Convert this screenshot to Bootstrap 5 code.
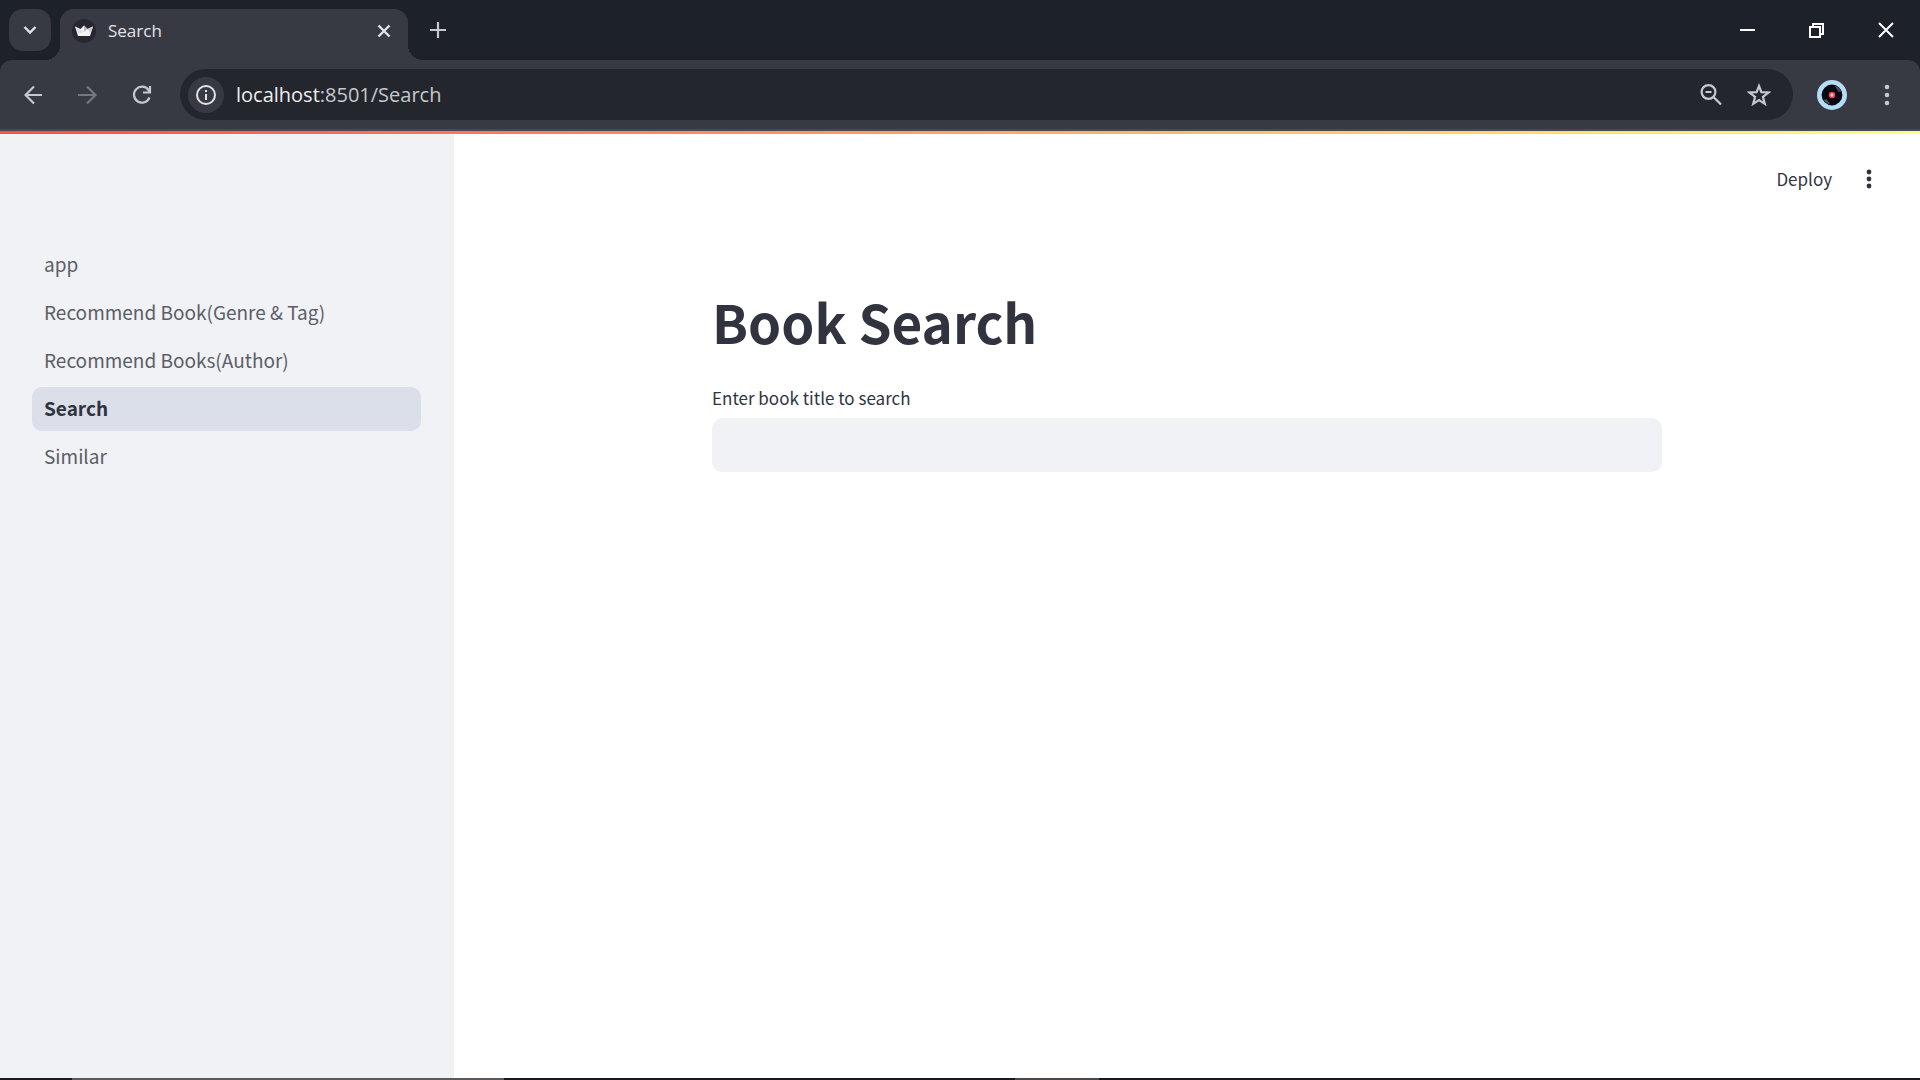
<!DOCTYPE html>
<html lang="en">
<head>
<meta charset="utf-8">
<meta name="viewport" content="width=device-width, initial-scale=1">
<title>Search</title>
<link href="https://cdn.jsdelivr.net/npm/bootstrap@5.3.0/dist/css/bootstrap.min.css" rel="stylesheet">
<style>
  body { font-family: "Noto Sans CJK JP", "Noto Sans", sans-serif; color: #31333f; background: #fff; }
  button { padding: 0; border: 0; background: none; color: inherit; }
  svg { display: block; }

  /* Browser window */
  .tabstrip { height: 60px; padding: 9px 0 0 9px; background: #1d2129; color: #e3e3e6; font-family: "Open Sans", sans-serif; }
  .tab-list-btn { width: 42px; height: 42px; border-radius: 14px; background: #383a43; }
  .tab-active { position: relative; width: 348px; height: 51px; margin-left: 9px; padding: 0 16px 8px 12px; border-radius: 14px 14px 0 0; background: #383a43; font-size: 17px; line-height: 24px; }
  .tab-active::before, .tab-active::after { content: ""; position: absolute; bottom: 0; width: 15px; height: 15px; }
  .tab-active::before { right: 100%; background: radial-gradient(circle at 0 0, transparent 15px, #383a43 15px); }
  .tab-active::after { left: 100%; background: radial-gradient(circle at 100% 0, transparent 15px, #383a43 15px); }
  .tab-add { height: 42px; }
  .win-btn { width: 69px; height: 42px; color: #fff; }
  .toolbar-wrap { background: #1d2129; }
  .toolbar { height: 71px; padding: 0 30px 0 24px; border-radius: 12px 12px 0 0; border-bottom: 2px solid #484a52; background: #383a43; color: #c7c8cf; }
  .nav-icons { width: 156px; gap: 34px; }
  .omnibox { height: 51px; border-radius: 26px; padding: 0 22px 0 8px; background: #24262e; }
  .site-info { width: 36px; height: 36px; border-radius: 50%; background: #383a43; color: #e3e3e6; }
  .address { font-family: "Open Sans", sans-serif; font-size: 20px; line-height: 28px; color: #c7c8cc; }
  .address b { font-weight: 400; color: #eeeef0; }
  .browser-menu { margin-left: 37px; }

  /* Page */
  .decoration { height: 3px; background: linear-gradient(90deg, #ff4b4b, #fffd80); }
  .side { width: 454px; padding: 109px 33px 32px 32px; background: #f0f2f6; }
  .side-link { display: block; padding: 7px 12px 9px; border-radius: 10px; font-size: 19px; line-height: 28px; color: #5c5e67; text-decoration: none; }
  .side-link.current { background: #dadfe9; color: #31333f; font-weight: 600; }
  .page-top { height: 90px; padding: 0 42px; gap: 28px; }
  .deploy { font-size: 17px; line-height: 24px; }
  .page-col { width: 100%; max-width: 950px; padding-top: 64px; }
  .page-title { margin-bottom: 32px; font-size: 53px; line-height: 66px; font-weight: 700; }
  .field-label { font-size: 17px; line-height: 24px; }
  .field-box { height: 54px; border: 0; border-radius: 10px; background: #f0f2f6; }
  .taskbar { height: 2px; background: #1c191e; }
  .task-wide { width: 432px; height: 2px; margin-left: 72px; background: #5b595b; }
  .task-short { width: 84px; height: 2px; margin-left: 511px; background: #4a484b; }
</style>
</head>
<body class="d-flex flex-column min-vh-100">
  <header>
    <div class="tabstrip d-flex">
      <button class="tab-list-btn d-flex align-items-center justify-content-center" aria-label="Search tabs">
        <svg width="14" height="10" viewBox="0 0 14 10" fill="none" stroke="currentColor" stroke-width="2.4"><path d="M1.5 2 7 7.500 12.500 2"/></svg>
      </button>
      <div class="tab-active d-flex align-items-center">
        <svg width="24" height="24" viewBox="0 0 24 24"><circle cx="12" cy="12" r="12" fill="#262730"/><path d="M3 7.500l5.500 2.500L12 6.500l3.500 3.500L21 7.500l-3 9.500H6z" fill="#f4f4f4"/><path d="M12 6.500l3.500 3.500L12 13z" fill="#b9b9bc"/><path d="M3 7.500 12 13l-5.500 1.500z" fill="#dedee0"/><path d="M15.500 10 21 7.500 18.500 14z" fill="#cfcfd2"/></svg>
        <span class="ms-2 ps-1 flex-grow-1">Search</span>
        <button aria-label="Close tab"><svg width="16" height="16" viewBox="0 0 16 16" stroke="currentColor" stroke-width="2.400"><path d="M2.500 2.500l11 11M13.500 2.500l-11 11"/></svg></button>
      </div>
      <button class="tab-add ms-3 ps-1 d-flex align-items-center" aria-label="New tab">
        <svg width="20" height="20" viewBox="0 0 20 20" stroke="#c7c8cf" stroke-width="2.200"><path d="M10 2v16M2 10h16"/></svg>
      </button>
      <div class="ms-auto d-flex">
        <button class="win-btn d-flex align-items-center justify-content-center" aria-label="Minimize"><svg width="15" height="15"><path d="M0 6h15v2H0z" fill="currentColor"/></svg></button>
        <button class="win-btn d-flex align-items-center justify-content-center" aria-label="Restore"><svg width="15" height="15" fill="none" stroke="currentColor" stroke-width="2"><path d="M1 4h10v10H1zM4 3V1h10v10h-2"/></svg></button>
        <button class="win-btn d-flex align-items-center justify-content-center" aria-label="Close"><svg width="16" height="16" stroke="currentColor" stroke-width="2"><path d="M1 1l14 14M15 1L1 15"/></svg></button>
      </div>
    </div>
    <div class="toolbar-wrap">
      <div class="toolbar d-flex align-items-center">
        <div class="nav-icons d-flex align-items-center">
          <button aria-label="Back"><svg width="20" height="20" viewBox="0 0 20 20" fill="none" stroke="currentColor" stroke-width="2.200"><path d="M18 10H2M10 1.500 1.500 10l8.500 8.500"/></svg></button>
          <button aria-label="Forward"><svg width="20" height="20" viewBox="0 0 20 20" fill="none" stroke="#75767c" stroke-width="2.200"><path d="M0 10h17M9 1.500l8.500 8.500L9 18.500"/></svg></button>
          <button aria-label="Reload"><svg width="20" height="20" viewBox="0 0 20 20" fill="none" stroke="currentColor" stroke-width="2.200"><path d="M17.500 12.500A8 8 0 1 1 16.500 5l1.500 2M18 1v6.500h-7"/></svg></button>
        </div>
        <div class="omnibox d-flex align-items-center flex-grow-1">
          <button class="site-info d-flex align-items-center justify-content-center" aria-label="Site information">
            <svg width="20" height="20" viewBox="0 0 20 20" fill="none" stroke="currentColor" stroke-width="2"><circle cx="10" cy="10" r="9"/><path d="M10 9v6M10 5v2"/></svg>
          </button>
          <div class="address ms-2 ps-1 flex-grow-1"><b>localhost</b>:8501/Search</div>
          <button aria-label="Zoom"><svg width="24" height="24" viewBox="0 0 24 24" fill="none" stroke="currentColor" stroke-width="2.200"><circle cx="9.500" cy="9" r="6.900"/><path d="M14.500 14l7.500 7.500M6.500 9h6"/></svg></button>
          <button class="ms-4" aria-label="Bookmark this tab"><svg width="24" height="24" viewBox="0 0 24 24" fill="none" stroke="currentColor" stroke-width="2.200"><path d="M12 3l2.400 6.100 7.100.400-5.600 4.300 1.900 7L12 17l-5.800 3.800 1.900-7L2.500 9.500l7.100-.4z"/></svg></button>
        </div>
        <button class="ms-4" aria-label="Profile"><svg width="30" height="30" viewBox="0 0 30 30"><circle cx="15" cy="15" r="12.700" fill="#080613" stroke="#b4dcf5" stroke-width="4.600"/><path d="M17.500 5.500a10 10 0 0 1 7 5.500l-3 1zM6.500 20l3-1 4 5.500a10 10 0 0 1-7-4.500z" fill="#4b4a55"/><circle cx="15" cy="15" r="3.300" fill="#e8386c"/><circle cx="15" cy="15" r="1.700" fill="#ffd06a"/></svg></button>
        <button class="browser-menu" aria-label="Browser menu"><svg width="6" height="22" viewBox="0 0 6 22" fill="currentColor"><circle cx="3" cy="3" r="2.300"/><circle cx="3" cy="11" r="2.300"/><circle cx="3" cy="19" r="2.300"/></svg></button>
      </div>
    </div>
  </header>

  <div class="decoration"></div>
  <div class="d-flex flex-grow-1">
    <nav class="side flex-shrink-0 d-flex flex-column gap-1" aria-label="Pages">
      <a class="side-link" href="#">app</a>
      <a class="side-link" href="#">Recommend Book(Genre &amp; Tag)</a>
      <a class="side-link" href="#">Recommend Books(Author)</a>
      <a class="side-link current" href="#" aria-current="page">Search</a>
      <a class="side-link" href="#">Similar</a>
    </nav>
    <main class="flex-grow-1 d-flex flex-column">
      <div class="page-top d-flex align-items-center justify-content-end">
        <button class="deploy">Deploy</button>
        <button class="px-1" aria-label="Main menu"><svg width="10" height="20" viewBox="0 0 10 20" fill="currentColor"><circle cx="5" cy="3" r="2.400"/><circle cx="5" cy="10" r="2.400"/><circle cx="5" cy="17" r="2.400"/></svg></button>
      </div>
      <div class="page-col mx-auto">
        <h1 class="page-title">Book Search</h1>
        <label class="field-label d-block mb-2" for="book-title">Enter book title to search</label>
        <input class="field-box form-control" id="book-title" type="text">
      </div>
    </main>
  </div>
  <footer class="taskbar d-flex"><div class="task-wide"></div><div class="task-short"></div></footer>
<script src="https://cdn.jsdelivr.net/npm/bootstrap@5.3.0/dist/js/bootstrap.bundle.min.js"></script>
</body>
</html>
